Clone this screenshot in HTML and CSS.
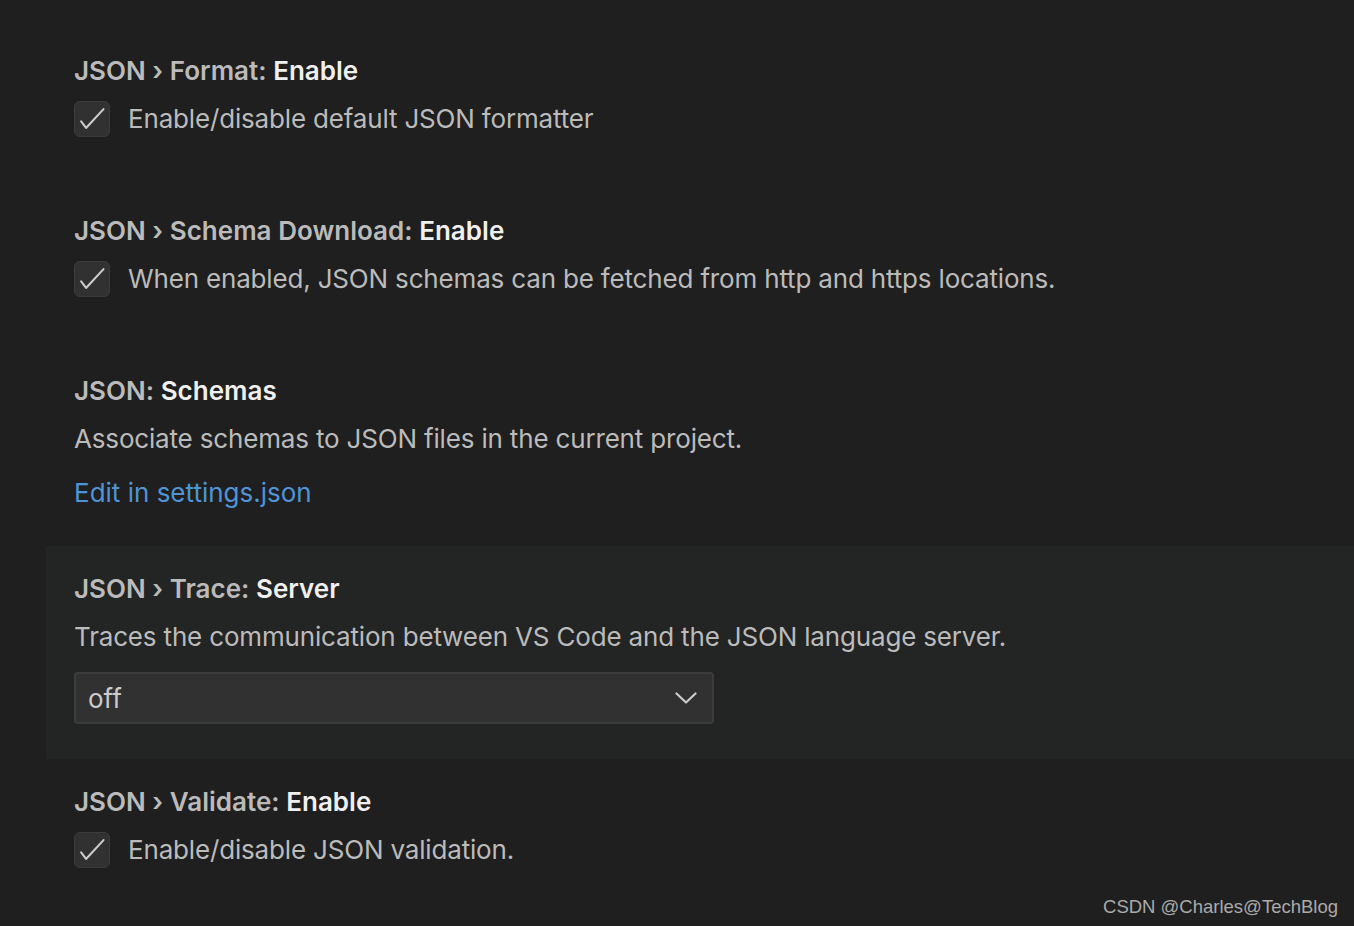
FILE: index.html
```html
<!DOCTYPE html>
<html lang="en">
<head>
<meta charset="utf-8">
<title>Settings</title>
<link rel="stylesheet" href="styles.css">
</head>
<body>
<div class="settings">
  <div class="item bool">
    <div class="title"><span class="cat">JSON › Format: </span><span class="label">Enable</span></div>
    <div class="bool-row">
      <span class="checkbox"><svg viewBox="0 0 36 36" width="36" height="36"><polyline points="6.5,20.5 11.7,27.5 30.2,7.5" fill="none" stroke="#cccccc" stroke-width="2.2" stroke-linecap="round" stroke-linejoin="round"/></svg></span>
      <span class="desc">Enable/disable default JSON formatter</span>
    </div>
  </div>
  <div class="item bool">
    <div class="title"><span class="cat">JSON › Schema Download: </span><span class="label">Enable</span></div>
    <div class="bool-row">
      <span class="checkbox"><svg viewBox="0 0 36 36" width="36" height="36"><polyline points="6.5,20.5 11.7,27.5 30.2,7.5" fill="none" stroke="#cccccc" stroke-width="2.2" stroke-linecap="round" stroke-linejoin="round"/></svg></span>
      <span class="desc">When enabled, JSON schemas can be fetched from http and https locations.</span>
    </div>
  </div>
  <div class="item">
    <div class="title"><span class="cat">JSON: </span><span class="label">Schemas</span></div>
    <div class="desc block">Associate schemas to JSON files in the current project.</div>
    <a class="link" href="#">Edit in settings.json</a>
  </div>
  <div class="item focused">
    <div class="title"><span class="cat">JSON › Trace: </span><span class="label">Server</span></div>
    <div class="desc block">Traces the communication between VS Code and the JSON language server.</div>
    <div class="select">
      <span class="value">off</span>
      <svg class="chev" viewBox="0 0 22 12" width="22" height="12"><polyline points="1.5,1.5 11,10.5 20.5,1.5" fill="none" stroke="#cccccc" stroke-width="2.2" stroke-linecap="round" stroke-linejoin="round"/></svg>
    </div>
  </div>
  <div class="item bool">
    <div class="title"><span class="cat">JSON › Validate: </span><span class="label">Enable</span></div>
    <div class="bool-row">
      <span class="checkbox"><svg viewBox="0 0 36 36" width="36" height="36"><polyline points="6.5,20.5 11.7,27.5 30.2,7.5" fill="none" stroke="#cccccc" stroke-width="2.2" stroke-linecap="round" stroke-linejoin="round"/></svg></span>
      <span class="desc">Enable/disable JSON validation.</span>
    </div>
  </div>
</div>
<div class="watermark">CSDN @Charles@TechBlog</div>
</body>
</html>
```
FILE: styles.css
```css
html, body {
  margin: 0;
  padding: 0;
  background: #1f1f1f;
  height: 100%;
  overflow: hidden;
}
body {
  font-family: Inter, "Noto Sans", sans-serif;
  color: #bbbbbb;
  position: relative;
}
.settings {
  padding-top: 28px;
  padding-left: 46px;
}
.item {
  padding: 25px 28px 35px;
}
.item.bool {
  padding-bottom: 51px;
}
.item.focused {
  background: #232424;
  padding-bottom: 35px;
}
.title {
  font-size: 26px;
  line-height: 36px;
  font-weight: 600;
  letter-spacing: 0.02px;
}
.cat {
  color: #bbbbbb;
}
.label {
  color: #f0f0f0;
}
.desc {
  font-size: 26px;
  line-height: 36px;
  color: #bbbbbb;
  letter-spacing: -0.17px;
}
.desc.block {
  margin-top: 12px;
}
.bool-row {
  margin-top: 12px;
  display: flex;
  align-items: center;
  gap: 18px;
}
.checkbox {
  width: 34px;
  height: 34px;
  border: 1px solid #3c3c3c;
  border-radius: 6px;
  background: #313131;
  display: flex;
  align-items: center;
  justify-content: center;
  flex: none;
}
.checkbox svg {
  display: block;
}
.link {
  display: block;
  margin-top: 18px;
  font-size: 26px;
  line-height: 36px;
  color: #4f94d6;
  text-decoration: none;
  width: max-content;
}
.select {
  margin-top: 17px;
  box-sizing: border-box;
  width: 640px;
  height: 52px;
  border: 2px solid #3c3c3c;
  border-radius: 4px;
  background: #313131;
  display: flex;
  align-items: center;
  justify-content: space-between;
  padding: 0 15px 0 12px;
}
.select .value {
  font-size: 26px;
  color: #cccccc;
}
.watermark {
  position: absolute;
  right: 16px;
  bottom: 8px;
  font-family: "Liberation Sans", Arial, sans-serif;
  font-size: 18.5px;
  color: #aaaaaa;
}
```
